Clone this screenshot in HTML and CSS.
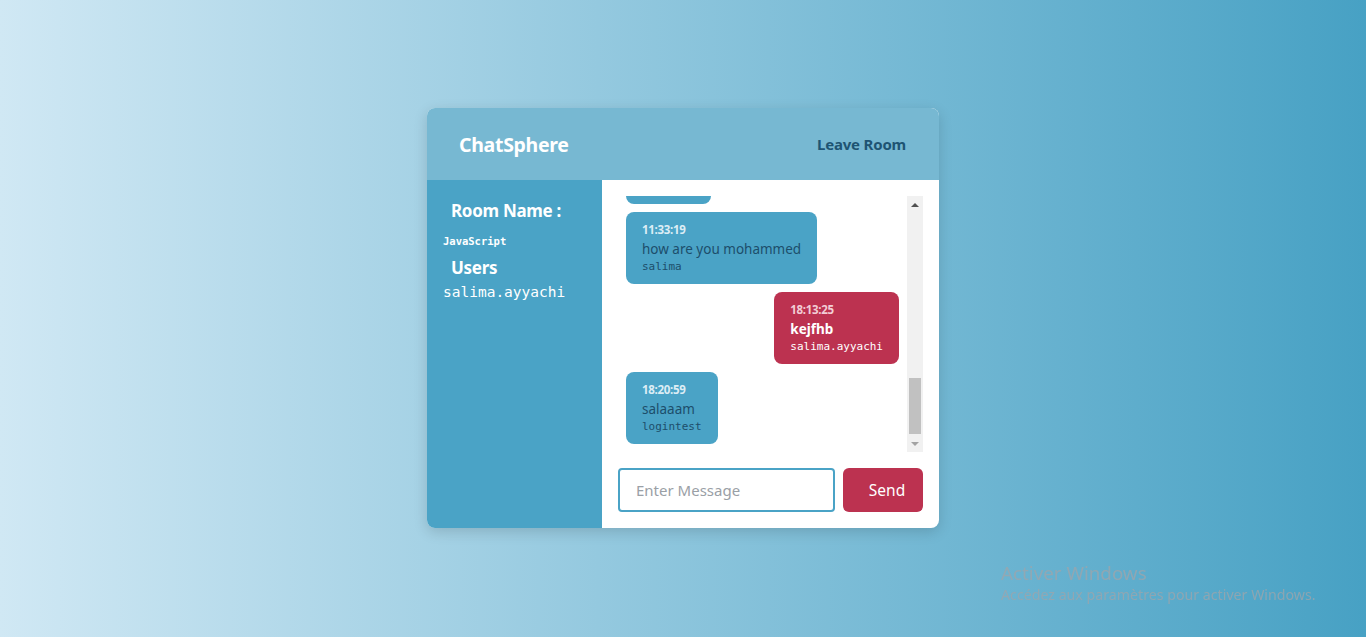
FILE: index.html
```html
<!DOCTYPE html>
<html lang="en">
<head>
<meta charset="utf-8">
<title>ChatSphere</title>
<link rel="stylesheet" href="styles.css">
</head>
<body>
<div class="chat-container">
  <header class="chat-header">
    <h1 class="logo">ChatSphere</h1>
    <a class="leave-btn" href="#">Leave Room</a>
  </header>
  <div class="chat-body">
    <aside class="sidebar">
      <h3 class="side-title">Room Name :</h3>
      <p class="room-name">JavaScript</p>
      <h3 class="side-title">Users</h3>
      <ul class="users">
        <li>salima.ayyachi</li>
      </ul>
    </aside>
    <main class="chat-main">
      <div class="messages-wrap">
        <div class="messages">
          <div class="message clipped"></div>
          <div class="message">
            <p class="meta">11:33:19</p>
            <p class="text">how are you mohammed</p>
            <p class="user">salima</p>
          </div>
          <div class="message mine">
            <p class="meta">18:13:25</p>
            <p class="text">kejfhb</p>
            <p class="user">salima.ayyachi</p>
          </div>
          <div class="message">
            <p class="meta">18:20:59</p>
            <p class="text">salaaam</p>
            <p class="user">logintest</p>
          </div>
        </div>
        <div class="scrollbar">
          <span class="arrow up"></span>
          <div class="track"><div class="thumb"></div></div>
          <span class="arrow down"></span>
        </div>
      </div>
      <form class="chat-form">
        <input type="text" class="msg-input" placeholder="Enter Message">
        <button type="button" class="send-btn">Send</button>
      </form>
    </main>
  </div>
</div>
<div class="watermark">
  <div class="wm-title">Activer Windows</div>
  <div class="wm-sub">Accédez aux paramètres pour activer Windows.</div>
</div>
</body>
</html>
```

FILE: styles.css
```css
* { box-sizing: border-box; }
html, body { height: 100%; }
body {
  margin: 0;
  padding-bottom: 1px;
  font-family: "Noto Sans", "Open Sans", sans-serif;
  background: linear-gradient(to right, #d0e8f4, #47a1c4);
  display: flex;
  align-items: center;
  justify-content: center;
  overflow: hidden;
}
.chat-container {
  width: 512px;
  height: 420px;
  border-radius: 8px;
  overflow: hidden;
  background: #fff;
  box-shadow: 0 4px 14px rgba(0, 0, 0, 0.15);
  display: flex;
  flex-direction: column;
}
.chat-header {
  height: 72px;
  flex: none;
  background: #77b8d2;
  display: flex;
  align-items: center;
  justify-content: space-between;
  padding: 0 33px 0 32px;
}
.logo {
  margin: 0;
  font-size: 19.5px;
  font-weight: 700;
  color: #fff;
  letter-spacing: -0.3px;
}
.leave-btn {
  color: #1e5473;
  text-decoration: none;
  font-weight: 700;
  font-size: 15px;
  letter-spacing: -0.2px;
}
.chat-body {
  flex: 1;
  display: flex;
  min-height: 0;
}
.sidebar {
  width: 175px;
  flex: none;
  background: #4aa3c6;
  color: #fff;
  padding: 19px 16px;
}
.side-title {
  margin: 0 0 0 8px;
  font-size: 17px;
  font-weight: 700;
  line-height: 24px;
  letter-spacing: -0.3px;
}
.room-name {
  margin: 10px 0 7px;
  font-family: "DejaVu Sans Mono", monospace;
  font-size: 10.5px;
  font-weight: 700;
  line-height: 16px;
}
.users {
  list-style: none;
  margin: 2px 0 0;
  padding: 0;
  font-family: "DejaVu Sans Mono", monospace;
  font-size: 14.5px;
  line-height: 20px;
}
.chat-main {
  flex: 1;
  display: flex;
  flex-direction: column;
  padding: 16px;
  gap: 16px;
  min-width: 0;
}
.messages-wrap {
  height: 256px;
  display: flex;
}
.messages {
  flex: 1;
  overflow: hidden;
  display: flex;
  flex-direction: column;
  justify-content: flex-end;
  align-items: flex-start;
  gap: 8px;
  padding: 0 8px 8px;
}
.message {
  flex: none;
  background: #4aa3c6;
  border-radius: 8px;
  padding: 10px 16px;
  color: #1d4e6b;
}
.message.clipped {
  width: 85px;
  height: 72px;
}
.message p { margin: 0; }
.meta {
  font-size: 11.5px;
  font-weight: 700;
  line-height: 16px;
  color: #dcedf5;
  letter-spacing: -0.3px;
}
.text {
  font-size: 13.5px;
  line-height: 22px;
}
.user {
  font-family: "DejaVu Sans Mono", monospace;
  font-size: 11px;
  line-height: 14px;
}
.message.mine {
  align-self: flex-end;
  background: #bc3250;
  color: #fff;
}
.message.mine .meta { color: #f2cdd5; }
.message.mine .text { font-weight: 700; }
.scrollbar {
  width: 16px;
  flex: none;
  background: #f1f1f1;
  display: flex;
  flex-direction: column;
  align-items: center;
}
.arrow {
  height: 17px;
  width: 16px;
  flex: none;
  display: flex;
  align-items: center;
  justify-content: center;
}
.arrow::before {
  content: "";
  width: 0;
  height: 0;
  border-left: 4px solid transparent;
  border-right: 4px solid transparent;
}
.arrow.up::before { border-bottom: 4px solid #505050; }
.arrow.down::before { border-top: 4px solid #a3a3a3; }
.track {
  flex: 1;
  width: 100%;
  display: flex;
  flex-direction: column;
  justify-content: flex-end;
  align-items: center;
  padding-bottom: 1px;
}
.thumb {
  width: 12px;
  height: 56px;
  background: #c1c1c1;
}
.chat-form {
  height: 44px;
  display: flex;
  gap: 8px;
  margin: 0;
}
.msg-input {
  flex: 1;
  min-width: 0;
  border: 2px solid #4aa3c6;
  border-radius: 4px;
  padding: 0 16px;
  font-family: inherit;
  font-size: 15px;
  outline: none;
}
.msg-input::placeholder { color: #9aa0a6; }
.send-btn {
  width: 80px;
  border: none;
  border-radius: 6px;
  padding: 0 0 0 8px;
  background: #bc3250;
  color: #fff;
  font-family: inherit;
  font-size: 15.5px;
}
.watermark {
  position: fixed;
  left: 1001px;
  top: 561px;
  color: rgba(155, 165, 172, 0.8);
}
.wm-title { font-size: 18.8px; line-height: 24px; }
.wm-sub { font-size: 14.2px; line-height: 20px; }
```
